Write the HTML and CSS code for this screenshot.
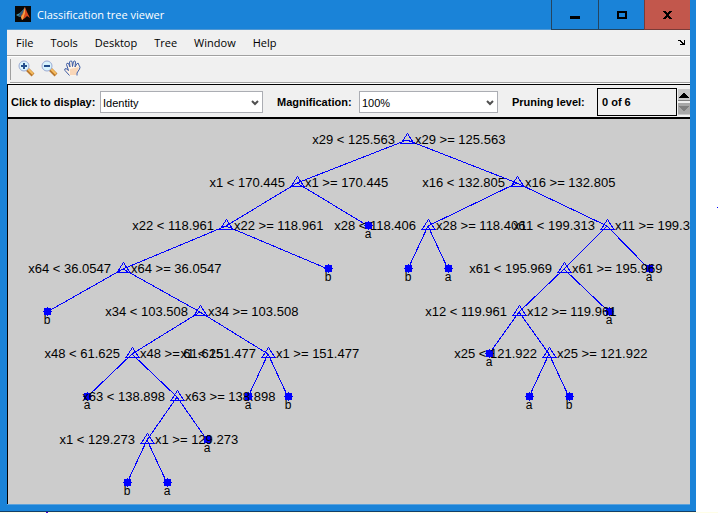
FILE: index.html
```html
<!DOCTYPE html>
<html lang="en">
<head>
<meta charset="utf-8">
<title>Classification tree viewer</title>
<link rel="stylesheet" href="styles.css">
</head>
<body>
<main class="window">
  <header class="titlebar">
    <svg class="app-icon" width="16" height="16" viewBox="0 0 16 16" aria-hidden="true">
      <rect width="16" height="16" fill="#080808"/>
      <path d="M1 9 L5 7 L8 4 L10 1 L8 8 L5 11 Z" fill="#3f9fb8"/>
      <path d="M5 7 L8 4 L10 1 L7 9 L5 11 L3 10 Z" fill="#315877"/>
      <path d="M10 1 L12 6 L15 12 L12 10 L10 12 L7 14 L6 10 L8 7 Z" fill="#d8481c"/>
      <path d="M10 1 L10 7 L8 13 L7 14 L6 11 L8 8 Z" fill="#f4a347"/>
    </svg>
    <h1 class="title">Classification tree viewer</h1>
    <button class="win-btn" type="button" aria-label="Minimize">
      <svg width="12" height="10" shape-rendering="crispEdges"><rect x="1" y="6" width="10" height="3"/></svg>
    </button>
    <button class="win-btn" type="button" aria-label="Maximize">
      <svg width="12" height="10" shape-rendering="crispEdges"><path d="M1 1H11V9H1Z M3 3V7H9V3Z" fill-rule="evenodd"/></svg>
    </button>
    <button class="win-btn close" type="button" aria-label="Close">
      <svg width="12" height="10" shape-rendering="crispEdges"><path d="M1 1H4V2H5V3H6V2H7V1H10V2H9V3H8V4H7V6H8V7H9V8H10V9H7V8H6V7H5V8H4V9H1V8H2V7H3V6H4V4H3V3H2V2H1Z"/></svg>
    </button>
  </header>

  <div class="client">
    <nav class="menubar">
      <button type="button">File</button>
      <button type="button">Tools</button>
      <button type="button">Desktop</button>
      <button type="button">Tree</button>
      <button type="button">Window</button>
      <button type="button">Help</button>
      <button class="dock" type="button" aria-label="Dock window">
        <svg width="8" height="6" shape-rendering="crispEdges"><path d="M0 0H3V1H4V2H5V3H6V0H7V5H2V4H4V3H3V2H2V1H0Z"/></svg>
      </button>
    </nav>

    <div class="toolbar">
      <button type="button" aria-label="Zoom in">
        <svg width="18" height="18" viewBox="0 0 18 18">
          <path d="M9 9 L15 15" stroke="#b9772d" stroke-width="4"/>
          <path d="M10 9 L15 14" stroke="#f6bd60" stroke-width="2"/>
          <circle cx="6" cy="6" r="5" fill="#d8f3fc" stroke="#9cabd4" stroke-width="1"/>
          <path d="M3 6H9M6 3V9" stroke="#234e8c" stroke-width="2"/>
        </svg>
      </button>
      <button type="button" aria-label="Zoom out">
        <svg width="18" height="18" viewBox="0 0 18 18">
          <path d="M9 9 L15 15" stroke="#b9772d" stroke-width="4"/>
          <path d="M10 9 L15 14" stroke="#f6bd60" stroke-width="2"/>
          <circle cx="6" cy="6" r="5" fill="#d8f3fc" stroke="#9cabd4" stroke-width="1"/>
          <path d="M3 6H9" stroke="#234e8c" stroke-width="2"/>
        </svg>
      </button>
      <button type="button" aria-label="Pan">
        <svg width="18" height="18" viewBox="0 0 18 18">
          <path d="M5.500 15.500 L1 10.500 Q0 8.500 2 8.500 L4.500 10.500 L2.500 4.500 Q2.500 2.500 4.500 3.500 L6 7 L5.500 2 Q6.500 0 8 1.500 L8.500 6.500 L9.500 1.500 Q11 0 11.500 2 L11 7 L13 3.500 Q15 2.500 14.800 5 L15.500 6 Q16.500 7 15.500 9 L13 13 V15.500 Z" fill="#fff3e6"/>
          <path d="M6 9 L15 7 L12 15 H6 Z" fill="#f8d6b8"/>
          <path d="M5.500 15.500 L1 10.500 Q0 8.500 2 8.500 L4.500 10.500 L2.500 4.500 Q2.500 2.500 4.500 3.500 L6 7 L5.500 2 Q6.500 0 8 1.500 L8.500 6.500 L9.500 1.500 Q11 0 11.500 2 L11 7 L13 3.500 Q15 2.500 14.800 5 L15.500 6 Q16.500 7 15.500 9 L13 13 V15.500" fill="none" stroke="#3b5ba5" stroke-width="1"/>
        </svg>
      </button>
    </div>

    <form class="controls">
      <label for="display">Click to display:</label>
      <span class="combo">
        <select id="display"><option>Identity</option></select>
        <svg width="8" height="6" viewBox="0 0 8 6"><path d="M1 1 L4 4 L7 1" fill="none" stroke="#505050" stroke-width="2"/></svg>
      </span>
      <label class="spaced" for="magnification">Magnification:</label>
      <span class="combo">
        <select id="magnification"><option>100%</option></select>
        <svg width="8" height="6" viewBox="0 0 8 6"><path d="M1 1 L4 4 L7 1" fill="none" stroke="#505050" stroke-width="2"/></svg>
      </span>
      <label class="spaced" for="level">Pruning level:</label>
      <output class="level" id="level">0 of 6</output>
      <span class="spinner">
        <button type="button" aria-label="Increase pruning level"><svg width="12" height="6" shape-rendering="crispEdges"><path d="M1 6 L6 0 L11 6Z"/></svg></button>
        <button type="button" aria-label="Decrease pruning level" disabled><svg width="12" height="6" shape-rendering="crispEdges"><path d="M1 0 H11 L6 6Z" fill="#808080"/></svg></button>
      </span>
    </form>

    <section class="canvas" aria-label="Decision tree">
      <svg class="tree" width="100%" height="100%">
        <defs>
          <path id="branch" d="M-6 3.500 L0.500 -6.500 L7 3.500 Z"/>
          <path id="leaf" d="M-3 -3H0V-4H1V-3H4V0H5V1H4V4H1V5H0V4H-3V1H-4V0H-3Z"/>
        </defs>
        <g transform="translate(-8 -119)">
          <path class="edges" d="M407 140L297 183M407 140L517 183M297 183L226 226M297 183L368 226M517 183L428 226M517 183L607 226M226 226L123 269M226 226L328 269M428 226L408 269M428 226L448 269M607 226L564 269M607 226L649 269M123 269L47 312M123 269L200 312M564 269L519 312M564 269L609 312M200 312L132 354M200 312L268 354M519 312L489 354M519 312L549 354M132 354L87 397M132 354L177 397M268 354L248 397M268 354L288 397M549 354L529 397M549 354L569 397M177 397L147 440M177 397L207 440M147 440L127 483M147 440L167 483"/>
          <g class="branches">
            <use href="#branch" x="407" y="140"/><use href="#branch" x="297" y="183"/><use href="#branch" x="517" y="183"/>
            <use href="#branch" x="226" y="226"/><use href="#branch" x="428" y="226"/><use href="#branch" x="607" y="226"/>
            <use href="#branch" x="123" y="269"/><use href="#branch" x="564" y="269"/><use href="#branch" x="200" y="312"/>
            <use href="#branch" x="519" y="312"/><use href="#branch" x="132" y="354"/><use href="#branch" x="268" y="354"/>
            <use href="#branch" x="549" y="354"/><use href="#branch" x="177" y="397"/><use href="#branch" x="147" y="440"/>
          </g>
          <g class="leaves">
            <use href="#leaf" x="368" y="225"/><use href="#leaf" x="328" y="268"/><use href="#leaf" x="408" y="268"/>
            <use href="#leaf" x="448" y="268"/><use href="#leaf" x="649" y="268"/><use href="#leaf" x="47" y="311"/>
            <use href="#leaf" x="609" y="311"/><use href="#leaf" x="489" y="353"/><use href="#leaf" x="87" y="396"/>
            <use href="#leaf" x="248" y="396"/><use href="#leaf" x="288" y="396"/><use href="#leaf" x="529" y="396"/>
            <use href="#leaf" x="569" y="396"/><use href="#leaf" x="207" y="439"/><use href="#leaf" x="127" y="482"/>
            <use href="#leaf" x="167" y="482"/>
          </g>
          <g class="left">
            <text x="395" y="144">x29 &lt; 125.563</text>
            <text x="285" y="187">x1 &lt; 170.445</text>
            <text x="505" y="187">x16 &lt; 132.805</text>
            <text x="214" y="230">x22 &lt; 118.961</text>
            <text x="416" y="230">x28 &lt; 118.406</text>
            <text x="595" y="230">x11 &lt; 199.313</text>
            <text x="111" y="273">x64 &lt; 36.0547</text>
            <text x="552" y="273">x61 &lt; 195.969</text>
            <text x="188" y="316">x34 &lt; 103.508</text>
            <text x="507" y="316">x12 &lt; 119.961</text>
            <text x="120" y="358">x48 &lt; 61.625</text>
            <text x="256" y="358">x1 &lt; 151.477</text>
            <text x="537" y="358">x25 &lt; 121.922</text>
            <text x="165" y="401">x63 &lt; 138.898</text>
            <text x="135" y="444">x1 &lt; 129.273</text>
          </g>
          <g class="right">
            <text x="415" y="144">x29 &gt;= 125.563</text>
            <text x="305" y="187">x1 &gt;= 170.445</text>
            <text x="525" y="187">x16 &gt;= 132.805</text>
            <text x="234" y="230">x22 &gt;= 118.961</text>
            <text x="436" y="230">x28 &gt;= 118.406</text>
            <text x="615" y="230">x11 &gt;= 199.313</text>
            <text x="131" y="273">x64 &gt;= 36.0547</text>
            <text x="572" y="273">x61 &gt;= 195.969</text>
            <text x="208" y="316">x34 &gt;= 103.508</text>
            <text x="527" y="316">x12 &gt;= 119.961</text>
            <text x="140" y="358">x48 &gt;= 61.625</text>
            <text x="276" y="358">x1 &gt;= 151.477</text>
            <text x="557" y="358">x25 &gt;= 121.922</text>
            <text x="185" y="401">x63 &gt;= 138.898</text>
            <text x="155" y="444">x1 &gt;= 129.273</text>
          </g>
          <g class="classes">
            <text x="368" y="238">a</text><text x="328" y="281">b</text><text x="408" y="281">b</text>
            <text x="448" y="281">a</text><text x="649" y="281">a</text><text x="47" y="324">b</text>
            <text x="609" y="324">a</text><text x="489" y="366">a</text><text x="87" y="409">a</text>
            <text x="248" y="409">a</text><text x="288" y="409">b</text><text x="529" y="409">a</text>
            <text x="569" y="409">b</text><text x="207" y="452">a</text><text x="127" y="495">b</text>
            <text x="167" y="495">a</text>
          </g>
        </g>
      </svg>
    </section>
  </div>
</main>
<aside class="backdrop"><i></i></aside>
<footer class="underlay"></footer>
</body>
</html>
```
FILE: styles.css
```css
* {
  box-sizing: border-box;
}

body {
  margin: 0;
  height: 100vh;
  display: grid;
  grid-template: minmax(0, 1fr) 1px / minmax(0, 1fr) 22px;
  background: #fff;
  color: #000;
  font: 11px "Liberation Sans", Arial, sans-serif;
  overflow: hidden;
}

button {
  margin: 0;
  padding: 0;
  border: 0;
  background: none;
  color: inherit;
  font: inherit;
}

svg {
  display: block;
}

.window {
  display: flex;
  flex-direction: column;
  min-height: 0;
  padding: 0 6px 6px 7px;
  background: #1a83d8;
  border-bottom: 1px solid #123f68;
}

/* Title bar */
.titlebar {
  display: flex;
  height: 30px;
  flex: none;
  border-bottom: 1px solid #5298d2;
}

.app-icon {
  margin: 6px 6px 0 8px;
}

.title {
  flex: 1;
  margin: 0;
  color: #fff;
  font: 11px/30px "Open Sans", "Noto Sans", sans-serif;
}

.win-btn {
  display: grid;
  place-items: center;
  width: 46px;
  height: 30px;
  border: 1px solid #24445f;
  border-width: 0 0 1px 1px;
}

.win-btn:first-of-type {
  width: 47px;
}

.win-btn.close {
  background: #c2574c;
  border-color: #783b38;
}

/* Menus and toolbar */
.client {
  display: flex;
  flex: 1;
  flex-direction: column;
  min-height: 0;
  background: #f0f0f0;
  border-bottom: 1px solid #5ba2dc;
}

.menubar {
  display: flex;
  gap: 17px;
  height: 27px;
  flex: none;
  padding: 0 4px 0 9px;
  border-bottom: 1px solid #fff;
  box-shadow: inset 0 -1px #a0a0a0;
  font: 11px/26px "Open Sans", "Noto Sans", sans-serif;
}

.dock {
  margin-left: auto;
}

.toolbar {
  display: flex;
  gap: 5px;
  height: 27px;
  flex: none;
  margin-left: 3px;
  padding: 3px 0 0 8px;
  border-bottom: 1px solid #fff;
  box-shadow: inset 0 -1px #a0a0a0;
  background: linear-gradient(#a0a0a0, #a0a0a0) 0 2px / 1px 21px no-repeat;
}

.toolbar button {
  width: 18px;
  height: 18px;
}

/* Display controls */
.controls {
  display: grid;
  grid-template-columns: 89px 163px 96px 139px 99px 80px 12px;
  align-items: center;
  height: 35px;
  flex: none;
  padding: 2px 0 0 3px;
  border: solid #000;
  border-width: 1px 0 2px 1px;
  font-weight: bold;
  overflow: hidden;
}

.spaced {
  padding-left: 14px;
}

.combo {
  position: relative;
  height: 22px;
}

.combo select {
  width: 100%;
  height: 100%;
  padding: 1px 2px 0;
  appearance: none;
  border: 1px solid #abadb3;
  border-radius: 0;
  background: #fff;
  color: #000;
  font: 11px "Liberation Sans", Arial, sans-serif;
}

.combo svg {
  position: absolute;
  top: 9px;
  right: 4px;
}

.level {
  height: 28px;
  padding-left: 4px;
  border: 1px solid #000;
  line-height: 26px;
}

.spinner {
  display: grid;
  gap: 2px;
  margin-left: 1px;
}

.spinner button {
  display: grid;
  place-items: center;
  height: 12px;
  background: #c8c8c8;
  border-bottom: 1px solid #808080;
}

.spinner button:disabled {
  background: #a8a8a8;
  border-bottom-color: #c8c8c8;
}

/* Tree canvas */
.canvas {
  flex: 1;
  min-height: 0;
  background: #ccc;
  border-left: 1px solid #000;
}

.tree {
  font-size: 13px;
  overflow: hidden;
}

.edges,
.branches {
  fill: none;
  stroke: #00f;
  stroke-width: 1px;
  shape-rendering: crispEdges;
}

.leaves {
  fill: #00f;
  shape-rendering: crispEdges;
}

.left {
  text-anchor: end;
}

.classes {
  text-anchor: middle;
  font-size: 12px;
}

/* Page behind the window */
.backdrop {
  position: relative;
}

.backdrop i {
  position: absolute;
  top: 207px;
  right: 0;
  width: 1px;
  height: 1px;
  background: #00f;
}

.underlay {
  grid-column: 1 / -1;
  background: linear-gradient(#50d, #50d) 46px 0 / 2px 1px no-repeat #fffee8;
}
```
